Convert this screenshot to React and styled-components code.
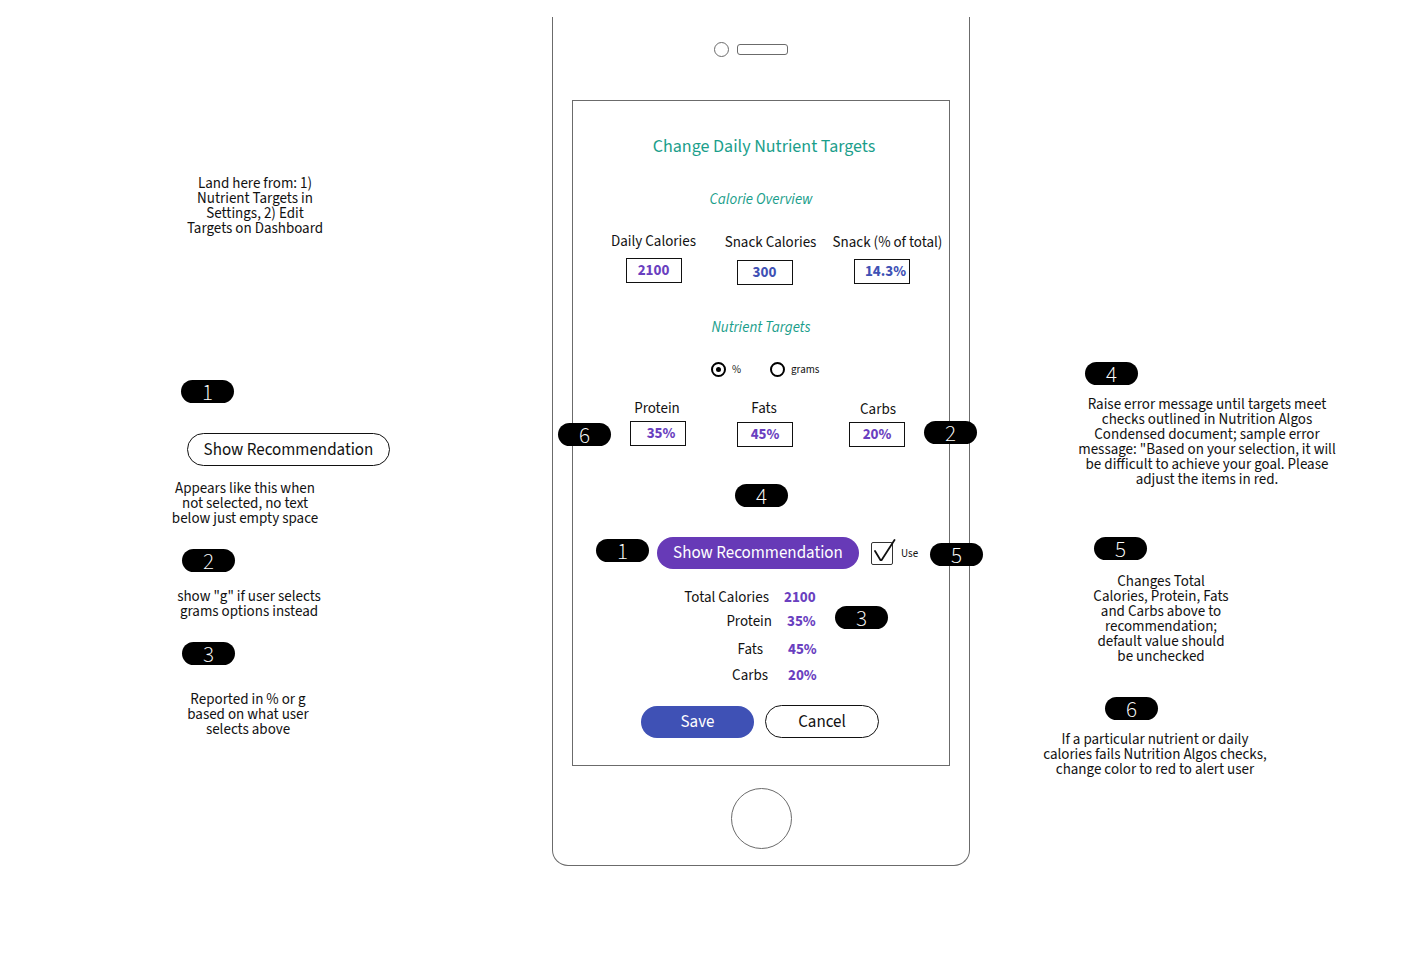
import React from "react";
import styled, { createGlobalStyle } from "styled-components";

const Colors = {
  teal: "#1a9e8b",
  purple: "#673ab7",
  value: "#6a3fc0",
  blue: "#3f51b5",
  line: "#6b6b6b",
  text: "#111111",
};

const GlobalStyle = createGlobalStyle`
  body {
    margin: 0;
    background: #ffffff;
    font-family: "Source Sans Pro", "Source Sans 3", Lato, "Liberation Sans", sans-serif;
    color: ${Colors.text};
  }
  * { box-sizing: border-box; }
`;

const App = () => {
  return (
    <>
      <GlobalStyle />
      <Page>
        <SideColumn $ml={160} $w={240}>
          <Note $mt={176} $ml={15} $w={160}>
            Land here from: 1)
            <br />
            Nutrient Targets in
            <br />
            Settings, 2) Edit
            <br />
            Targets on Dashboard
          </Note>
          <Badge $mt={144} $ml={21}>1</Badge>
          <OutlineButton $mt={30} $ml={27}>Show Recommendation</OutlineButton>
          <Note $mt={14.5} $ml={0} $w={170}>
            Appears like this when
            <br />
            not selected, no text
            <br />
            below just empty space
          </Note>
          <Badge $mt={23.5} $ml={22}>2</Badge>
          <Note $mt={16.5} $ml={4} $w={170}>
            show "g" if user selects
            <br />
            grams options instead
          </Note>
          <Badge $mt={23.5} $ml={22}>3</Badge>
          <Note $mt={26.5} $ml={3} $w={170}>
            Reported in % or g
            <br />
            based on what user
            <br />
            selects above
          </Note>
        </SideColumn>

        <Phone>
          <Speaker>
            <Camera />
            <Grille />
          </Speaker>

          <Screen>
            <Title>Change Daily Nutrient Targets</Title>
            <Section $mt={33}>Calorie Overview</Section>

            <FieldGrid $cols="117px 117px 117px" $pl={22} $mt={24}>
              <Field>
                <FieldLabel>Daily Calories</FieldLabel>
                <ValueBox $gap={7} $dx={0} $tone={Colors.value}>2100</ValueBox>
              </Field>
              <Field>
                <FieldLabel $dy={1}>Snack Calories</FieldLabel>
                <ValueBox $gap={7} $dx={-6} $dy={1} $tone={Colors.blue}>300</ValueBox>
              </Field>
              <Field>
                <FieldLabel $dy={1}>Snack (% of total)</FieldLabel>
                <ValueBox $gap={7} $dx={-6} $tx={8} $tone={Colors.blue}>14.3%</ValueBox>
              </Field>
            </FieldGrid>

            <Section $mt={34}>Nutrient Targets</Section>

            <RadioRow>
              <RadioOption>
                <Radio $checked />
                <RadioLabel>%</RadioLabel>
              </RadioOption>
              <RadioOption>
                <Radio />
                <RadioLabel>grams</RadioLabel>
              </RadioOption>
            </RadioRow>

            <FieldGrid $cols="110px 104px 124px" $pl={29} $mt={23}>
              <Field>
                <FieldLabel>Protein</FieldLabel>
                <ValueBox $gap={3} $dx={1} $tx={6} $tone={Colors.value}>35%</ValueBox>
              </Field>
              <Field>
                <FieldLabel>Fats</FieldLabel>
                <ValueBox $gap={3} $dx={1} $dy={1} $tone={Colors.value}>45%</ValueBox>
              </Field>
              <Field>
                <FieldLabel $dy={1}>Carbs</FieldLabel>
                <ValueBox $gap={3} $dx={-1} $tone={Colors.value}>20%</ValueBox>
              </Field>
            </FieldGrid>

            <RecommendRow>
              <PillButton $bg={Colors.purple} $w={202} $fs={17}>
                Show Recommendation
              </PillButton>
              <CheckBox>
                <svg width="26" height="30" viewBox="0 0 26 30">
                  <path
                    d="M4 20 L10 30 L23.5 9"
                    fill="none"
                    stroke="#111"
                    strokeWidth="1.8"
                    strokeLinejoin="round"
                    strokeLinecap="round"
                  />
                </svg>
              </CheckBox>
              <SmallLabel>Use</SmallLabel>
            </RecommendRow>

            <Summary>
              <SummaryRow $mt={0}>
                <SummaryLabel>Total Calories</SummaryLabel>
                <SummaryValue>2100</SummaryValue>
              </SummaryRow>
              <SummaryRow $mt={6} $lx={3} $vx={3}>
                <SummaryLabel>Protein</SummaryLabel>
                <SummaryValue>35%</SummaryValue>
              </SummaryRow>
              <SummaryRow $mt={10} $lx={-6} $vx={4}>
                <SummaryLabel>Fats</SummaryLabel>
                <SummaryValue>45%</SummaryValue>
              </SummaryRow>
              <SummaryRow $mt={8} $lx={-1} $vx={4}>
                <SummaryLabel>Carbs</SummaryLabel>
                <SummaryValue>20%</SummaryValue>
              </SummaryRow>
            </Summary>

            <ActionRow>
              <PillButton $bg={Colors.blue} $w={113} $fs={17}>
                Save
              </PillButton>
              <PillButton $outline $w={114} $h={33} $fs={17}>
                Cancel
              </PillButton>
            </ActionRow>
          </Screen>

          <HomeButton />

          <Marker $x={5} $y={406}>6</Marker>
          <Marker $x={371} $y={404}>2</Marker>
          <Marker $x={182} $y={467}>4</Marker>
          <Marker $x={43} $y={522}>1</Marker>
          <Marker $x={377} $y={526}>5</Marker>
          <Marker $x={282} $y={589}>3</Marker>
        </Phone>

        <SideColumn $ml={50} $w={340}>
          <Badge $mt={362} $ml={65}>4</Badge>
          <Note $mt={11.5} $ml={47} $w={280}>
            Raise error message until targets meet
            <br />
            checks outlined in Nutrition Algos
            <br />
            Condensed document; sample error
            <br />
            message: "Based on your selection, it will
            <br />
            be difficult to achieve your goal. Please
            <br />
            adjust the items in red.
          </Note>
          <Badge $mt={50.5} $ml={74}>5</Badge>
          <Note $mt={13.5} $ml={51} $w={180}>
            Changes Total
            <br />
            Calories, Protein, Fats
            <br />
            and Carbs above to
            <br />
            recommendation;
            <br />
            default value should
            <br />
            be unchecked
          </Note>
          <Badge $mt={33.5} $ml={85}>6</Badge>
          <Note $mt={11.5} $ml={5} $w={260}>
            If a particular nutrient or daily
            <br />
            calories fails Nutrition Algos checks,
            <br />
            change color to red to alert user
          </Note>
        </SideColumn>
      </Page>
    </>
  );
};

const Page = styled.div`
  width: 1403px;
  height: 975px;
  display: flex;
  align-items: flex-start;
  overflow: hidden;
`;

const SideColumn = styled.div`
  display: flex;
  flex-direction: column;
  align-items: flex-start;
  width: ${(p) => p.$w}px;
  margin-left: ${(p) => p.$ml}px;
  flex-shrink: 0;
`;

const Note = styled.p`
  margin: ${(p) => p.$mt}px 0 0 ${(p) => p.$ml}px;
  width: ${(p) => p.$w}px;
  font-size: 15px;
  line-height: 15px;
  text-align: center;
  color: ${Colors.text};
  white-space: nowrap;
`;

const Badge = styled.div`
  width: 53px;
  height: 23px;
  border-radius: 12px;
  background: #000;
  color: #fff;
  font-size: 23px;
  font-weight: 300;
  line-height: 25px;
  text-align: center;
  margin: ${(p) => p.$mt || 0}px 0 0 ${(p) => p.$ml || 0}px;
  flex-shrink: 0;
`;

const Marker = styled(Badge)`
  position: absolute;
  left: ${(p) => p.$x}px;
  top: ${(p) => p.$y}px;
  margin: 0;
`;

const OutlineButton = styled.div`
  width: 203px;
  height: 33px;
  margin: ${(p) => p.$mt}px 0 0 ${(p) => p.$ml}px;
  border: 1px solid #111;
  border-radius: 17px;
  display: flex;
  align-items: center;
  justify-content: center;
  font-size: 17px;
  color: ${Colors.text};
`;

const Phone = styled.div`
  position: relative;
  width: 418px;
  height: 849px;
  margin: 17px 0 0 152px;
  border: 1px solid ${Colors.line};
  border-top: none;
  border-radius: 0 0 16px 16px;
  display: flex;
  flex-direction: column;
  align-items: flex-start;
  flex-shrink: 0;
`;

const Speaker = styled.div`
  display: flex;
  align-items: center;
  gap: 8px;
  margin: 25px 0 0 161px;
`;

const Camera = styled.div`
  width: 15px;
  height: 15px;
  border-radius: 50%;
  border: 1px solid ${Colors.line};
`;

const Grille = styled.div`
  width: 51px;
  height: 11px;
  border-radius: 3px;
  border: 1px solid ${Colors.line};
`;

const Screen = styled.div`
  width: 378px;
  height: 666px;
  margin: 43px 0 0 19px;
  border: 1px solid ${Colors.line};
  display: flex;
  flex-direction: column;
`;

const HomeButton = styled.div`
  width: 61px;
  height: 61px;
  border-radius: 50%;
  border: 1px solid ${Colors.line};
  margin: 22px auto 0;
`;

const Title = styled.h1`
  margin: 35px 0 0 6px;
  font-size: 18px;
  font-weight: 400;
  line-height: 22px;
  text-align: center;
  color: ${Colors.teal};
`;

const Section = styled.h2`
  margin: ${(p) => p.$mt}px 0 0 0;
  font-size: 15px;
  font-style: italic;
  font-weight: 400;
  line-height: 18px;
  text-align: center;
  color: ${Colors.teal};
`;

const FieldGrid = styled.div`
  display: grid;
  grid-template-columns: ${(p) => p.$cols};
  padding-left: ${(p) => p.$pl}px;
  margin-top: ${(p) => p.$mt}px;
`;

const Field = styled.div`
  display: flex;
  flex-direction: column;
  align-items: center;
`;

const FieldLabel = styled.span`
  font-size: 15px;
  line-height: 18px;
  color: ${Colors.text};
  white-space: nowrap;
  margin-top: ${(p) => p.$dy || 0}px;
`;

const ValueBox = styled.div`
  width: 56px;
  height: 25px;
  margin-top: ${(p) => p.$gap + (p.$dy || 0)}px;
  transform: translateX(${(p) => p.$dx}px);
  padding-left: ${(p) => p.$tx || 0}px;
  border: 1px solid #111;
  display: flex;
  align-items: center;
  justify-content: center;
  font-size: 15px;
  font-weight: 700;
  color: ${(p) => p.$tone};
`;

const RadioRow = styled.div`
  display: flex;
  align-items: center;
  gap: 29px;
  margin: 25px 0 0 138px;
  height: 15px;
`;

const RadioOption = styled.div`
  display: flex;
  align-items: center;
  gap: 6px;
`;

const Radio = styled.span`
  position: relative;
  width: 15px;
  height: 15px;
  border-radius: 50%;
  border: 2.5px solid #000;

  &::after {
    content: "";
    display: ${(p) => (p.$checked ? "block" : "none")};
    position: absolute;
    left: 2.5px;
    top: 2.5px;
    width: 5px;
    height: 5px;
    border-radius: 50%;
    background: #000;
  }
`;

const RadioLabel = styled.span`
  font-size: 11px;
  line-height: 13px;
  color: ${Colors.text};
`;

const RecommendRow = styled.div`
  display: flex;
  align-items: center;
  margin: 90px 0 0 84px;
  height: 32px;
`;

const PillButton = styled.div`
  width: ${(p) => p.$w}px;
  height: ${(p) => p.$h || 32}px;
  border-radius: 17px;
  background: ${(p) => (p.$outline ? "#fff" : p.$bg)};
  border: ${(p) => (p.$outline ? "1px solid #111" : "none")};
  color: ${(p) => (p.$outline ? Colors.text : "#fff")};
  display: flex;
  align-items: center;
  justify-content: center;
  font-size: ${(p) => p.$fs}px;
  flex-shrink: 0;
`;

const CheckBox = styled.div`
  position: relative;
  align-self: flex-start;
  width: 22px;
  height: 23px;
  margin: 5px 0 0 12px;
  border: 1.5px solid #333;
  border-radius: 2px;

  svg {
    position: absolute;
    left: -1.5px;
    top: -12px;
  }
`;

const SmallLabel = styled.span`
  font-size: 11px;
  margin: 0 0 0 8px;
  color: ${Colors.text};
`;

const Summary = styled.div`
  display: flex;
  flex-direction: column;
  margin-top: 20px;
`;

const SummaryRow = styled.div`
  display: grid;
  grid-template-columns: 196px 60px;
  column-gap: 15px;
  height: 18px;
  align-items: center;
  margin-top: ${(p) => p.$mt}px;

  & > :first-child {
    transform: translateX(${(p) => p.$lx || 0}px);
  }
  & > :last-child {
    transform: translateX(${(p) => p.$vx || 0}px);
  }
`;

const SummaryLabel = styled.span`
  text-align: right;
  font-size: 15px;
  line-height: 18px;
  color: ${Colors.text};
`;

const SummaryValue = styled.span`
  font-size: 15px;
  line-height: 18px;
  font-weight: 700;
  color: ${Colors.value};
`;

const ActionRow = styled.div`
  display: flex;
  justify-content: center;
  align-items: center;
  gap: 11px;
  margin: 20px 0 0 -2px;
`;

export default App;
